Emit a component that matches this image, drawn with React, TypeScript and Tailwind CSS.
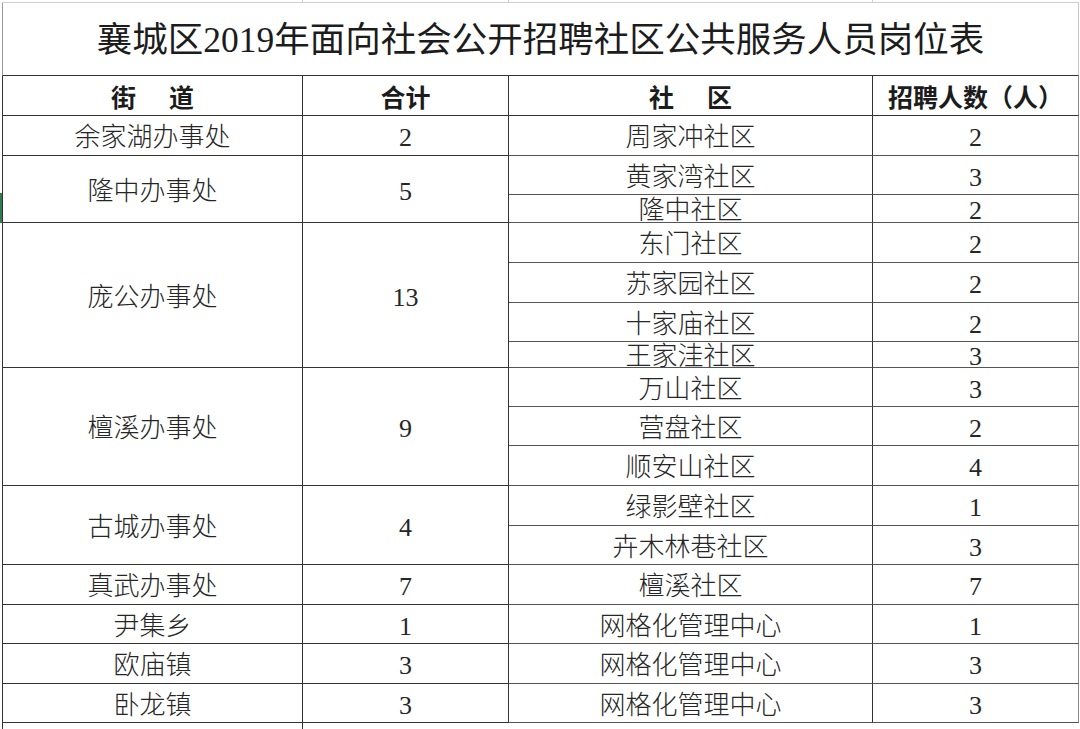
import React from "react";

type Sub = { name: string; count: string; h: string };
type Group = { street: string; total: string; subs: Sub[] };

const groups: Group[] = [
  { street: "余家湖办事处", total: "2", subs: [{ name: "周家冲社区", count: "2", h: "h-[40px]" }] },
  {
    street: "隆中办事处",
    total: "5",
    subs: [
      { name: "黄家湾社区", count: "3", h: "h-[39px]" },
      { name: "隆中社区", count: "2", h: "h-[28px]" },
    ],
  },
  {
    street: "庞公办事处",
    total: "13",
    subs: [
      { name: "东门社区", count: "2", h: "h-[40px]" },
      { name: "苏家园社区", count: "2", h: "h-[40px]" },
      { name: "十家庙社区", count: "2", h: "h-[39px]" },
      { name: "王家洼社区", count: "3", h: "h-[26px]" },
    ],
  },
  {
    street: "檀溪办事处",
    total: "9",
    subs: [
      { name: "万山社区", count: "3", h: "h-[39px]" },
      { name: "营盘社区", count: "2", h: "h-[39px]" },
      { name: "顺安山社区", count: "4", h: "h-[40px]" },
    ],
  },
  {
    street: "古城办事处",
    total: "4",
    subs: [
      { name: "绿影壁社区", count: "1", h: "h-[40px]" },
      { name: "卉木林巷社区", count: "3", h: "h-[39px]" },
    ],
  },
  { street: "真武办事处", total: "7", subs: [{ name: "檀溪社区", count: "7", h: "h-[40px]" }] },
  { street: "尹集乡", total: "1", subs: [{ name: "网格化管理中心", count: "1", h: "h-[39px]" }] },
  { street: "欧庙镇", total: "3", subs: [{ name: "网格化管理中心", count: "3", h: "h-[40px]" }] },
  { street: "卧龙镇", total: "3", subs: [{ name: "网格化管理中心", count: "3", h: "h-[39px]" }] },
];

const cell = "flex items-center justify-center overflow-hidden border-b border-r border-[#333] leading-none pt-[5px]";

const App = (): React.ReactElement => {
  return (
    <div className="flex w-[1080px] h-[729px] overflow-hidden bg-white text-[#262626] font-['Liberation_Serif','Noto_Sans_CJK_SC',serif]">
      {/* excel gutter */}
      <div className="flex flex-col w-[2px] shrink-0">
        <div className="h-[193px]"></div>
        <div className="h-[30px] bg-[#2f7d4f]"></div>
      </div>

      <div className="flex flex-col w-[1077px] shrink-0">
        <div className="flex h-[3px] border-b border-[#cfcfcf]">
          <div className="w-[301px] border-r border-[#cfcfcf]"></div>
          <div className="w-[206px] border-r border-[#cfcfcf]"></div>
          <div className="w-[364px] border-r border-[#cfcfcf]"></div>
          <div className="w-[206px]"></div>
        </div>

        <div className="flex items-center justify-center h-[73px] border-l border-r border-l-[#9a9a9a] border-r-[#c8c8c8] border-b border-b-[#333] text-[35.5px] leading-none pt-[4px] text-[#1c1c1c]">
          襄城区2019年面向社会公开招聘社区公共服务人员岗位表
        </div>

        <div className="flex h-[40px] border-l border-[#333] text-[25px] font-bold text-[#1c1c1c]">
          <div className={`${cell} w-[300px]`}>
            <span>街</span>
            <span className="ml-[33px]">道</span>
          </div>
          <div className={`${cell} w-[206px]`}>合计</div>
          <div className={`${cell} w-[364px]`}>
            <span>社</span>
            <span className="ml-[33px]">区</span>
          </div>
          <div className={`${cell} w-[206px] border-r-[#888]`}>招聘人数（人）</div>
        </div>

        {groups.map((g, i) => (
          <div key={i} className="flex border-l border-[#333] text-[26px] font-light">
            <div className={`${cell} w-[300px]`}>{g.street}</div>
            <div className={`${cell} w-[206px]`}>{g.total}</div>
            <div className="flex flex-col">
              {g.subs.map((s, j) => (
                <div key={j} className={`flex ${s.h}`}>
                  <div className={`${cell} w-[364px] border-b-[#555]`}>{s.name}</div>
                  <div className={`${cell} w-[206px] border-r-[#888] border-b-[#555]`}>{s.count}</div>
                </div>
              ))}
            </div>
          </div>
        ))}

        <div className="flex flex-1 border-l border-[#333]">
          <div className="w-[300px] border-r border-[#333]"></div>
        </div>
      </div>
    </div>
  );
};

export default App;
